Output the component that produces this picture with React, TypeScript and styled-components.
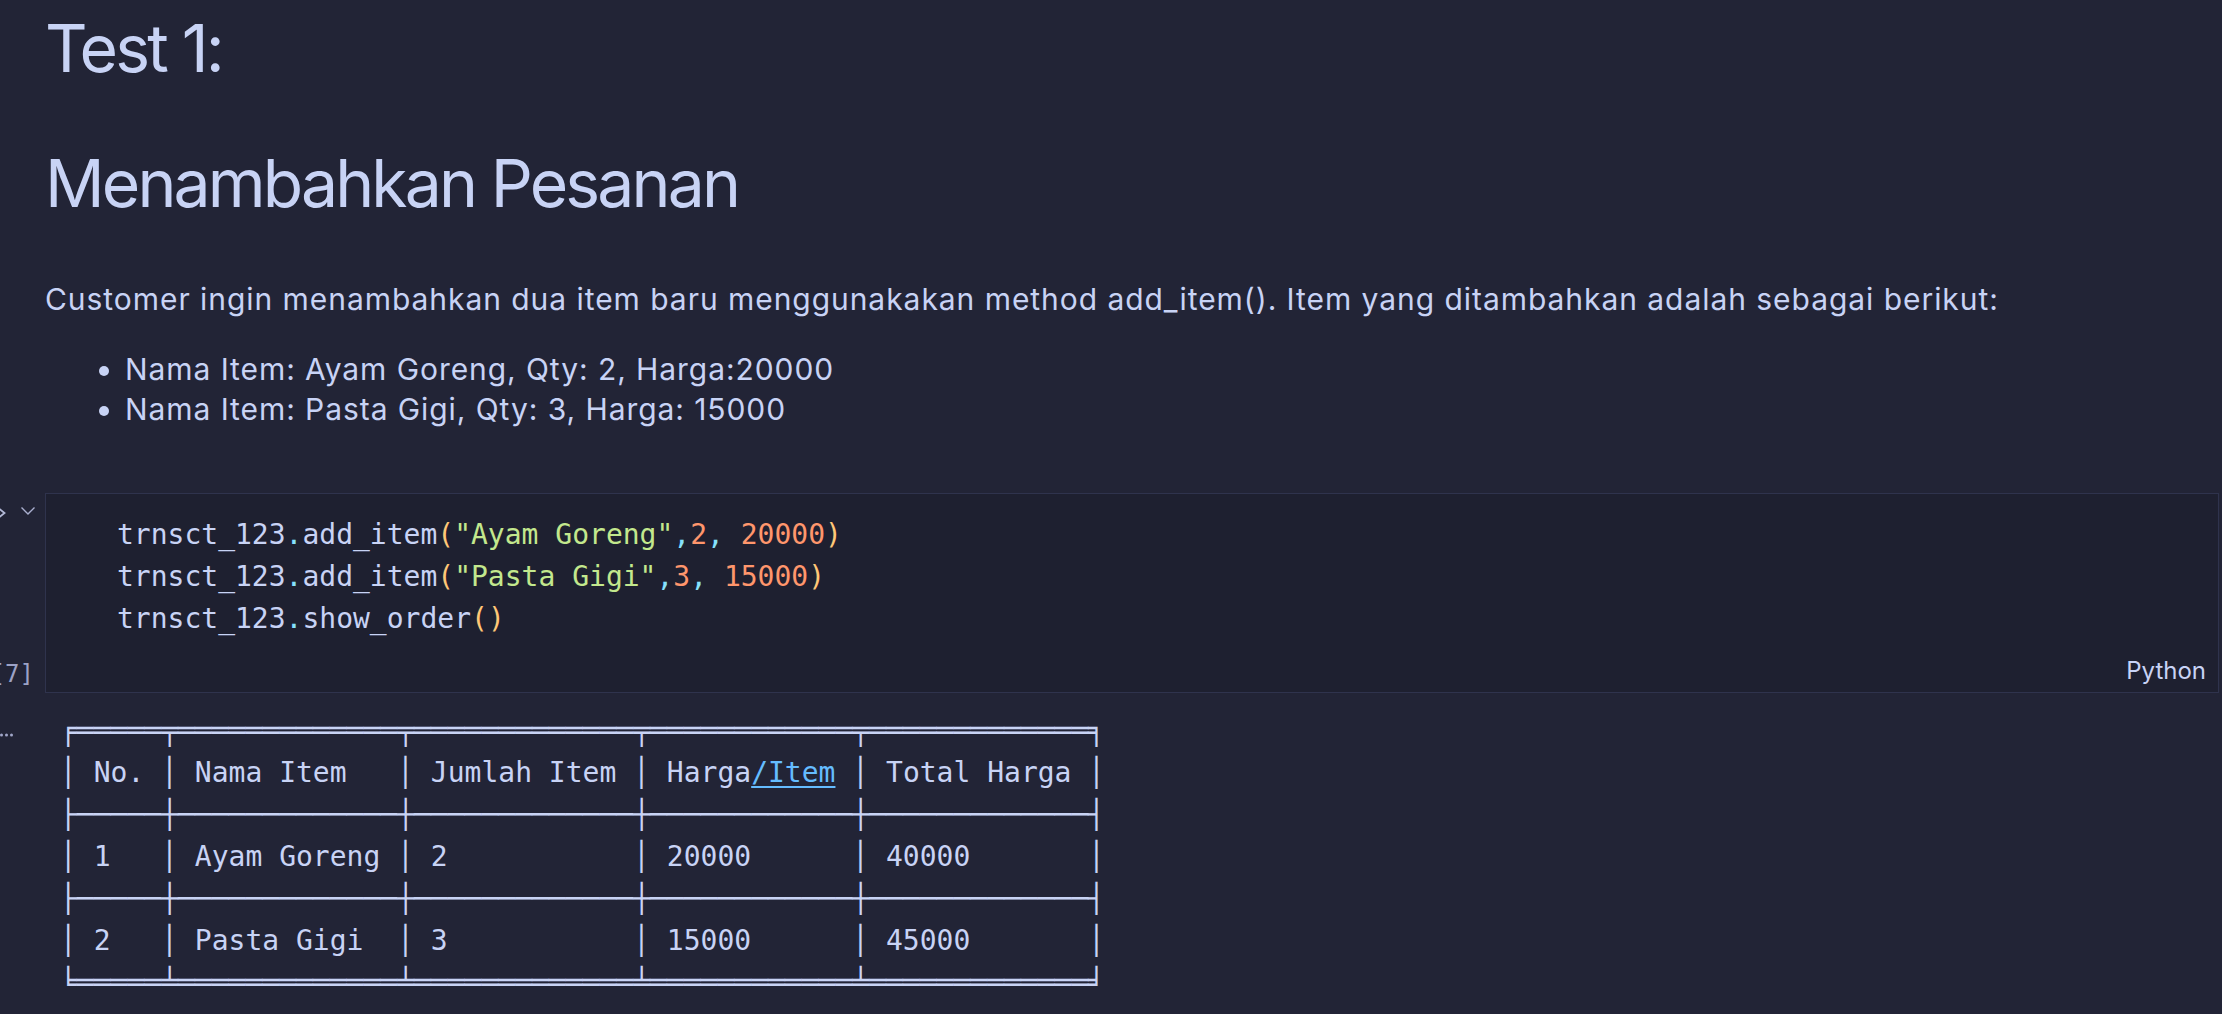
import React from "react";
import styled, { createGlobalStyle } from "styled-components";

const GlobalStyle = createGlobalStyle`
  html, body {
    margin: 0;
    padding: 0;
    background: #222436;
  }
  body {
    font-family: Inter, "Noto Sans", sans-serif;
    color: #c8d3f5;
  }
`;

const Page = styled.div`
  width: 2222px;
  min-height: 1014px;
  background: #222436;
  padding-top: 9px;
  box-sizing: border-box;
  overflow: hidden;
`;

const Markdown = styled.section`
  padding-left: 45px;
`;

const Heading = styled.h1<{ $gap: number }>`
  margin: 0 0 ${(p) => p.$gap}px;
  font-family: Inter, "Noto Sans", sans-serif;
  font-size: 66px;
  font-weight: 400;
  line-height: 79px;
  letter-spacing: -2.85px;
  color: #c8d3f5;
`;

const Paragraph = styled.p`
  margin: 0 0 29px;
  font-size: 30px;
  line-height: 42px;
  letter-spacing: 0.95px;
  color: #c8d3f5;
`;

const List = styled.ul`
  margin: 0 0 64px;
  padding-left: 80px;
  font-size: 30px;
  line-height: 40px;
  letter-spacing: 0.93px;
  color: #c8d3f5;
`;

const Item = styled.li``;

const CellRow = styled.div`
  display: grid;
  grid-template-columns: 45px 1fr;
  padding-right: 3px;
`;

const Gutter = styled.div`
  display: flex;
  flex-direction: column;
  justify-content: space-between;
  padding: 12px 0 7px;
  overflow: hidden;
`;

const ExecCount = styled.div`
  display: flex;
  justify-content: flex-end;
  width: 34px;
  font-family: "DejaVu Sans Mono", monospace;
  font-size: 24px;
  line-height: 24px;
  color: #9ca2c6;
  white-space: nowrap;
`;

const CodeBox = styled.div`
  background: #1e2030;
  border: 1px solid #2f334d;
  padding: 20px 12px 6px 71px;
`;

const Code = styled.pre`
  margin: 0;
  font-family: "DejaVu Sans Mono", "Liberation Mono", monospace;
  font-size: 28px;
  line-height: 42px;
  color: #c8d3f5;
`;

const Tok = styled.span<{ $c: string }>`
  color: ${(p) => p.$c};
`;

const CellFooter = styled.div`
  display: flex;
  justify-content: flex-end;
  margin-top: 16px;
  font-size: 24px;
  line-height: 30px;
  color: #c8d3f5;
`;

const OutputRow = styled.div`
  display: grid;
  grid-template-columns: 45px 1fr;
  margin-top: 17px;
`;

const OutGutter = styled.div`
  padding-top: 12px;
`;

const TableText = styled.pre`
  margin: 0 0 0 15px;
  font-family: "DejaVu Sans Mono", "Liberation Mono", monospace;
  font-size: 28px;
  line-height: 42px;
  color: #c8d3f5;
`;

const Link = styled.span`
  color: #65bcff;
  text-decoration: underline;
  text-underline-offset: 4px;
`;

const C = {
  fg: "#c8d3f5",
  dot: "#86e1fc",
  paren: "#ffc777",
  str: "#c3e88d",
  num: "#ff966c",
};

const RunIcons = () => (
  <svg width="40" height="18" viewBox="0 0 40 18" fill="none">
    <path d="M-3 2 L4.5 8 L-3 14" stroke="#b4bad8" strokeWidth="1.8" />
    <path d="M21.5 2.5 L28 9 L34.5 2.5" stroke="#a9afcf" strokeWidth="1.4" />
  </svg>
);

const Ellipsis = () => (
  <svg width="16" height="6" viewBox="0 0 16 6">
    <circle cx="1.5" cy="3" r="1.5" fill="#a0a6c8" />
    <circle cx="6.5" cy="3" r="1.5" fill="#a0a6c8" />
    <circle cx="11.5" cy="3" r="1.5" fill="#a0a6c8" />
  </svg>
);

const codeLine = (name: string, args: React.ReactNode) => (
  <>
    trnsct_123<Tok $c={C.dot}>.</Tok>
    {name}
    <Tok $c={C.paren}>(</Tok>
    {args}
    <Tok $c={C.paren}>)</Tok>
  </>
);

const addArgs = (s: string, q: string, p: string) => (
  <>
    <Tok $c={C.str}>"{s}"</Tok>
    <Tok $c={C.dot}>,</Tok>
    <Tok $c={C.num}>{q}</Tok>
    <Tok $c={C.dot}>,</Tok> <Tok $c={C.num}>{p}</Tok>
  </>
);

const widths = [5, 13, 13, 12, 13];
const rule = (l: string, h: string, m: string, r: string) =>
  l + widths.map((w) => h.repeat(w)).join(m) + r;
const row = (cells: string[]) =>
  "│" + cells.map((c, i) => (" " + c).padEnd(widths[i], " ")).join("│") + "│";

export default function App() {
  const top = rule("╒", "═", "╤", "╕");
  const mid = rule("├", "─", "┼", "┤");
  const bot = rule("╘", "═", "╧", "╛");
  return (
    <>
      <GlobalStyle />
      <Page>
        <Markdown>
          <Heading $gap={56}>Test 1:</Heading>
          <Heading $gap={55}>Menambahkan Pesanan</Heading>
          <Paragraph>
            Customer ingin menambahkan dua item baru menggunakakan method add_item(). Item yang
            ditambahkan adalah sebagai berikut:
          </Paragraph>
          <List>
            <Item>Nama Item: Ayam Goreng, Qty: 2, Harga:20000</Item>
            <Item>Nama Item: Pasta Gigi, Qty: 3, Harga: 15000</Item>
          </List>
        </Markdown>

        <CellRow>
          <Gutter>
            <RunIcons />
            <ExecCount>
              <span>[7]</span>
            </ExecCount>
          </Gutter>
          <CodeBox>
            <Code>
              {codeLine("add_item", addArgs("Ayam Goreng", "2", "20000"))}
              {"\n"}
              {codeLine("add_item", addArgs("Pasta Gigi", "3", "15000"))}
              {"\n"}
              {codeLine("show_order", null)}
            </Code>
            <CellFooter>Python</CellFooter>
          </CodeBox>
        </CellRow>

        <OutputRow>
          <OutGutter>
            <Ellipsis />
          </OutGutter>
          <TableText>
            {top + "\n"}
            {"│ No. │ Nama Item   │ Jumlah Item │ Harga"}
            <Link>/Item</Link>
            {" │ Total Harga │\n"}
            {mid + "\n"}
            {row(["1", "Ayam Goreng", "2", "20000", "40000"]) + "\n"}
            {mid + "\n"}
            {row(["2", "Pasta Gigi", "3", "15000", "45000"]) + "\n"}
            {bot}
          </TableText>
        </OutputRow>
      </Page>
    </>
  );
}
